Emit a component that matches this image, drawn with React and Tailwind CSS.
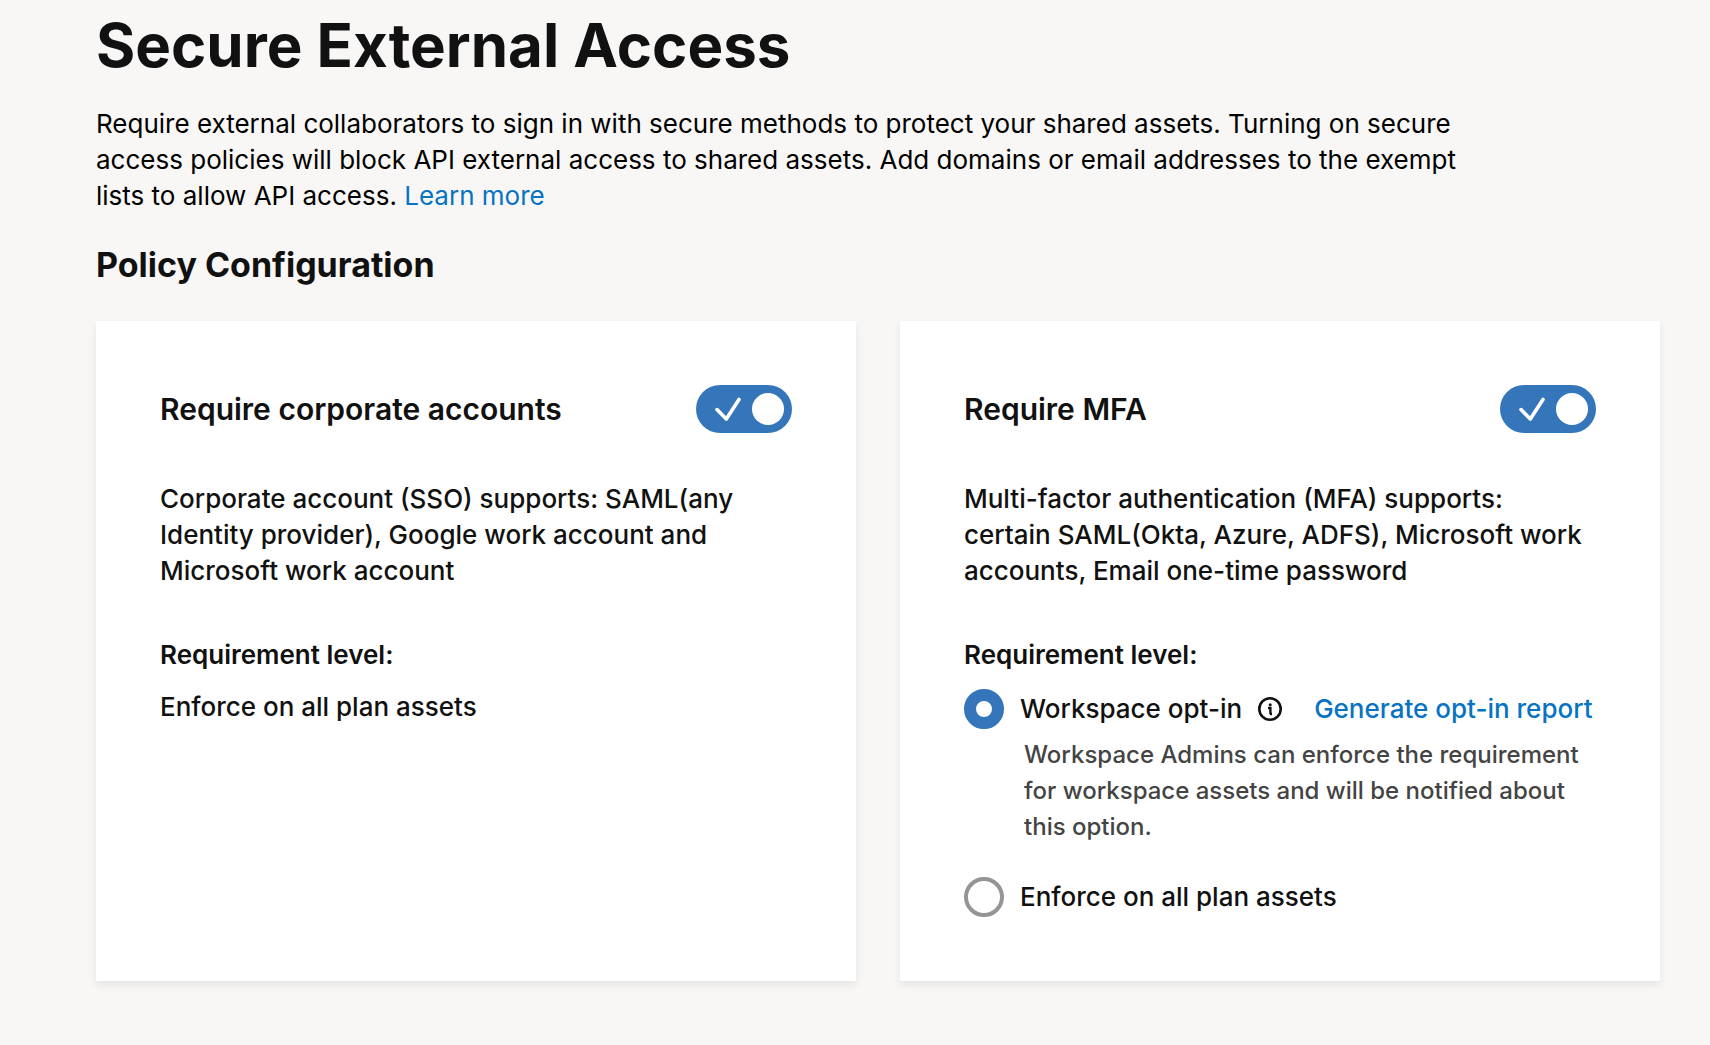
const Toggle = ({ labelledBy }) => (
  <span className="relative inline-flex h-12 w-24 shrink-0">
    <input
      type="checkbox"
      role="switch"
      defaultChecked
      aria-labelledby={labelledBy}
      className="peer h-12 w-24 cursor-pointer appearance-none rounded-full bg-gray-400 checked:bg-[#3576ba]"
    />
    <span className="pointer-events-none absolute top-2 left-2 size-8 rounded-full bg-white peer-checked:left-14" />
    <svg
      viewBox="0 0 28 26"
      fill="none"
      stroke="white"
      strokeWidth="3.6"
      strokeLinecap="round"
      strokeLinejoin="round"
      className="pointer-events-none absolute top-3 left-[18px] hidden h-[26px] w-7 peer-checked:block"
    >
      <path d="M3 12.6 L12.3 22 L25 2.4" />
    </svg>
  </span>
);

const Radio = ({ id, value, defaultChecked }) => (
  <input
    type="radio"
    id={id}
    name="mfa-level"
    value={value}
    defaultChecked={defaultChecked}
    className="size-10 shrink-0 cursor-pointer appearance-none rounded-full border-4 border-[#959595] bg-white checked:border-[12px] checked:border-[#3576ba]"
  />
);

const InfoIcon = () => (
  <svg viewBox="0 0 24 24" fill="none" stroke="#111" className="size-6">
    <circle cx="12" cy="12" r="10.7" strokeWidth="2.6" />
    <path d="M10 11 H12.4 V17.2 M12 17 H14" strokeWidth="2.4" />
    <circle cx="12.2" cy="7.8" r="1.5" fill="#111" stroke="none" />
  </svg>
);

const PolicyCard = ({ id, title, description, children }) => (
  <section className="bg-white p-16 shadow-[0_4px_8px_rgba(0,0,0,0.08)]">
    <div className="flex items-center justify-between">
      <h3 id={id} className="text-[30px] leading-9 font-semibold">
        {title}
      </h3>
      <Toggle labelledBy={id} />
    </div>
    <p className="mt-12 text-[26px] leading-9 font-medium">{description}</p>
    <h4 className="mt-12 text-[26px] leading-9 font-semibold">
      Requirement level:
    </h4>
    {children}
  </section>
);

export default function App() {
  return (
    <main className="min-h-screen bg-[#f8f7f6] pr-[50px] pb-16 pl-24 font-[Inter,sans-serif] text-[#111]">
      <h1 className="pt-3 text-[60px] leading-[66px] font-bold">
        Secure External Access
      </h1>
      <p className="mt-7 max-w-[1380px] text-[26px] leading-9 text-black">
        Require external collaborators to sign in with secure methods to protect
        your shared assets. Turning on secure access policies will block API
        external access to shared assets. Add domains or email addresses to the
        exempt lists to allow API access.{" "}
        <a href="#learn-more" className="text-[#0673c3]">
          Learn more
        </a>
      </p>
      <h2 className="mt-[30px] text-[34px] leading-[42px] font-bold">
        Policy Configuration
      </h2>

      <div className="mt-[35px] grid grid-cols-2 gap-11">
        <PolicyCard
          id="corporate"
          title="Require corporate accounts"
          description="Corporate account (SSO) supports: SAML(any Identity provider), Google work account and Microsoft work account"
        >
          <p className="mt-4 text-[26px] leading-9 font-medium">
            Enforce on all plan assets
          </p>
        </PolicyCard>

        <PolicyCard
          id="mfa"
          title="Require MFA"
          description="Multi-factor authentication (MFA) supports: certain SAML(Okta, Azure, ADFS), Microsoft work accounts, Email one-time password"
        >
          <div className="mt-4 flex items-center gap-4 text-[26px] leading-9 font-medium">
            <Radio id="opt-in" value="opt-in" defaultChecked />
            <label htmlFor="opt-in">Workspace opt-in</label>
            <button type="button" aria-label="About workspace opt-in">
              <InfoIcon />
            </button>
            <a href="#report" className="ml-4 text-[#0673c3]">
              Generate opt-in report
            </a>
          </div>
          <p className="mt-2 pl-[60px] text-2xl leading-9 font-medium text-[#444]">
            Workspace Admins can enforce the requirement for workspace assets
            and will be notified about this option.
          </p>
          <div className="mt-8 flex items-center gap-4 text-[26px] leading-9 font-medium">
            <Radio id="enforce" value="enforce" />
            <label htmlFor="enforce">Enforce on all plan assets</label>
          </div>
        </PolicyCard>
      </div>
    </main>
  );
}
